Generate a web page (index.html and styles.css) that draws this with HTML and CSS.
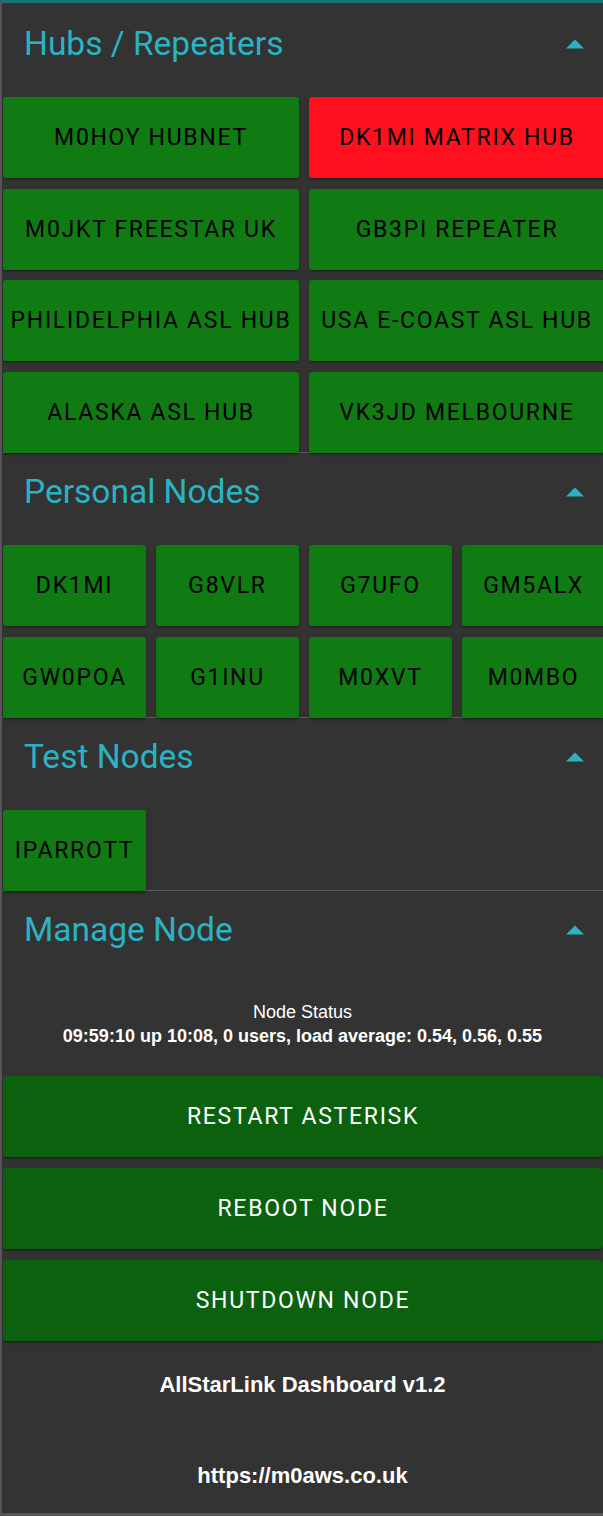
FILE: index.html
```html
<!DOCTYPE html>
<html lang="en">
<head>
<meta charset="utf-8">
<title>AllStarLink Dashboard</title>
<link rel="stylesheet" href="styles.css">
</head>
<body>
<div class="app">
  <section class="panel panel-first">
    <div class="panel-head">
      <h2 class="panel-title">Hubs / Repeaters</h2>
      <svg class="caret" viewBox="0 0 10 5" aria-hidden="true"><path d="M0 5L5 0L10 5Z"/></svg>
    </div>
    <div class="grid grid-2">
      <button class="node-btn">M0HOY HUBNET</button>
      <button class="node-btn node-btn-active">DK1MI MATRIX HUB</button>
      <button class="node-btn">M0JKT FREESTAR UK</button>
      <button class="node-btn">GB3PI REPEATER</button>
      <button class="node-btn">PHILIDELPHIA ASL HUB</button>
      <button class="node-btn">USA E-COAST ASL HUB</button>
      <button class="node-btn">ALASKA ASL HUB</button>
      <button class="node-btn">VK3JD MELBOURNE</button>
    </div>
  </section>

  <section class="panel">
    <div class="panel-head">
      <h2 class="panel-title">Personal Nodes</h2>
      <svg class="caret" viewBox="0 0 10 5" aria-hidden="true"><path d="M0 5L5 0L10 5Z"/></svg>
    </div>
    <div class="grid grid-4">
      <button class="node-btn">DK1MI</button>
      <button class="node-btn">G8VLR</button>
      <button class="node-btn">G7UFO</button>
      <button class="node-btn">GM5ALX</button>
      <button class="node-btn">GW0POA</button>
      <button class="node-btn">G1INU</button>
      <button class="node-btn">M0XVT</button>
      <button class="node-btn">M0MBO</button>
    </div>
  </section>

  <section class="panel">
    <div class="panel-head">
      <h2 class="panel-title">Test Nodes</h2>
      <svg class="caret" viewBox="0 0 10 5" aria-hidden="true"><path d="M0 5L5 0L10 5Z"/></svg>
    </div>
    <div class="grid grid-4">
      <button class="node-btn">IPARROTT</button>
    </div>
  </section>

  <section class="panel panel-manage">
    <div class="panel-head">
      <h2 class="panel-title">Manage Node</h2>
      <svg class="caret" viewBox="0 0 10 5" aria-hidden="true"><path d="M0 5L5 0L10 5Z"/></svg>
    </div>
    <div class="status">
      <div class="status-label">Node Status</div>
      <div class="status-value">09:59:10 up 10:08, 0 users, load average: 0.54, 0.56, 0.55</div>
    </div>
    <div class="actions">
      <button class="action-btn">RESTART ASTERISK</button>
      <button class="action-btn">REBOOT NODE</button>
      <button class="action-btn">SHUTDOWN NODE</button>
    </div>
  </section>

  <footer class="footer">
    <p class="footer-line">AllStarLink Dashboard v1.2</p>
    <p class="footer-line">https://m0aws.co.uk</p>
  </footer>
</div>
</body>
</html>
```

FILE: styles.css
```css
html, body {
  margin: 0;
  padding: 0;
  background: #333333;
}

body {
  font-family: Roboto, "Noto Sans", sans-serif;
  overflow: hidden;
}

.app {
  border-top: 3px solid #1e7378;
  border-left: 2px solid #555555;
  border-bottom: 3px solid #555555;
  overflow: hidden;
  background: #333333;
}

.panel {
  border-bottom: 1px solid #595959;
}

.panel-first {
  padding-top: 2px;
}

.panel-manage {
  border-bottom: none;
}

.panel-head {
  box-sizing: border-box;
  height: 92px;
  padding: 0 19px 14px 22px;
  display: flex;
  align-items: center;
  justify-content: space-between;
}

.panel-title {
  margin: 0;
  font-family: Roboto, sans-serif;
  font-weight: 400;
  font-size: 33.5px;
  line-height: 38px;
  color: #2ab4c3;
}

.caret {
  width: 18px;
  height: 10px;
  fill: #2ab4c3;
  flex: none;
}

.grid {
  display: grid;
  grid-auto-rows: 81px;
  column-gap: 10px;
  row-gap: 10.67px;
  margin-left: 1px;
  margin-bottom: -1px;
}

.grid-2 {
  grid-template-columns: 296px 296px;
}

.grid-4 {
  grid-template-columns: repeat(4, 143px);
}

.node-btn,
.action-btn {
  display: flex;
  align-items: center;
  justify-content: center;
  border: none;
  margin: 0;
  padding: 0;
  border-radius: 3px;
  font-family: Roboto, sans-serif;
  font-weight: 400;
  font-size: 23px;
  letter-spacing: 1.7px;
  white-space: nowrap;
  box-shadow: 0 3px 1px -2px rgba(0, 0, 0, 0.2), 0 2px 2px 0 rgba(0, 0, 0, 0.14), 0 1px 5px 0 rgba(0, 0, 0, 0.12);
  cursor: pointer;
}

.node-btn {
  background: #0f7b12;
  color: #000000;
}

.node-btn-active {
  background: #fe101f;
}

.status {
  text-align: center;
  color: #ffffff;
  font-family: "Liberation Sans", Arial, sans-serif;
  font-size: 18px;
  line-height: 24px;
  padding: 17px 0 28px;
}

.status-value {
  font-weight: 700;
}

.actions {
  display: flex;
  flex-direction: column;
  gap: 11px;
  margin-left: 1px;
}

.action-btn {
  height: 81px;
  width: 100%;
  background: #0b610e;
  color: #ffffff;
}

.footer {
  padding: 31px 0 24px;
  text-align: center;
  color: #ffffff;
  font-family: "Liberation Sans", Arial, sans-serif;
  font-weight: 700;
  font-size: 22px;
  line-height: 26px;
}

.footer-line {
  margin: 0;
}

.footer-line + .footer-line {
  margin-top: 65px;
}
```
